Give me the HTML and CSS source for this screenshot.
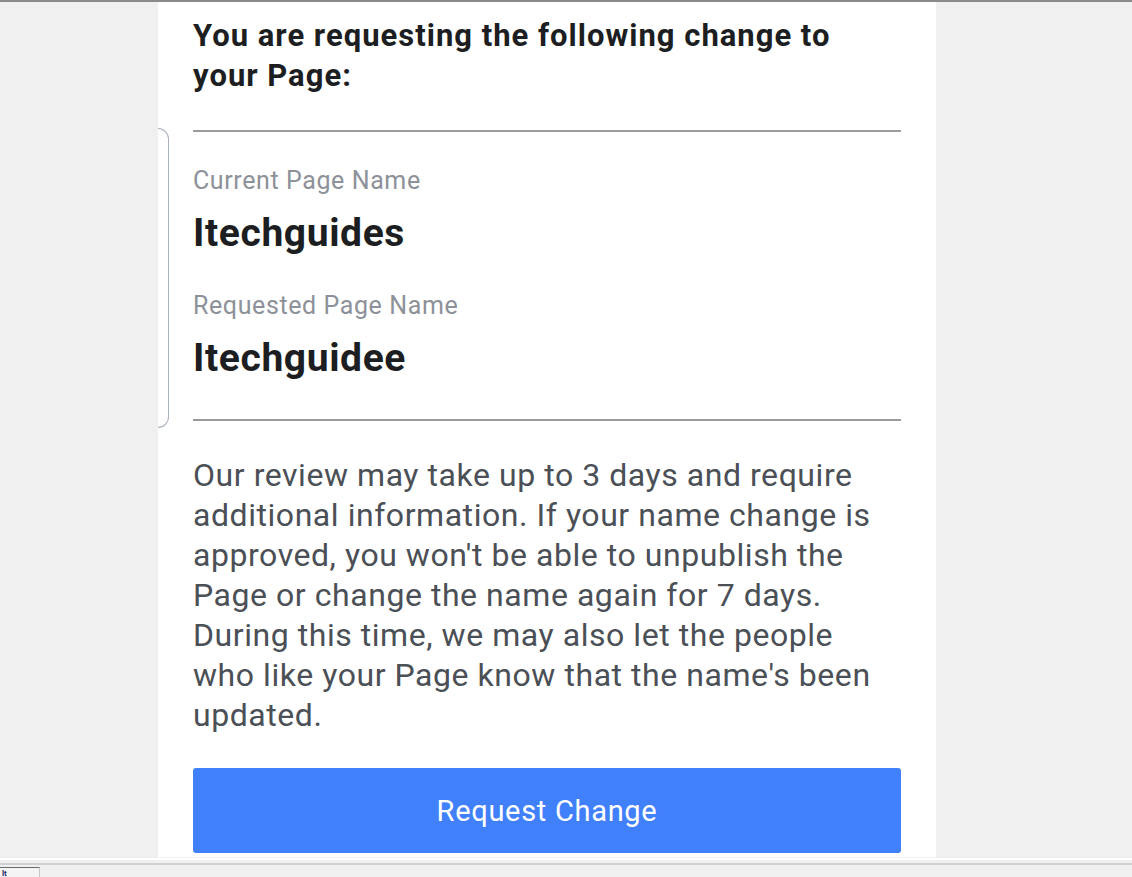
FILE: index.html
```html
<!DOCTYPE html>
<html lang="en">
<head>
<meta charset="utf-8">
<title>Request Change</title>
<link rel="stylesheet" href="styles.css">
</head>
<body>
<div class="topline"></div>
<main class="panel">
  <h1 class="heading">You are requesting the following change to your Page:</h1>
  <section class="names">
    <div class="bracket"></div>
    <div class="names-body">
      <div class="label">Current Page Name</div>
      <div class="name">Itechguides</div>
      <div class="label label-second">Requested Page Name</div>
      <div class="name">Itechguidee</div>
    </div>
  </section>
  <p class="notice">Our review may take up to 3 days and require additional information. If your name change is approved, you won't be able to unpublish the Page or change the name again for 7 days. During this time, we may also let the people who like your Page know that the name's been updated.</p>
  <button class="request" type="button">Request Change</button>
</main>
<footer class="statusbar">
  <div class="status-tab"><span class="tab-glyph">lt</span></div>
</footer>
</body>
</html>
```
FILE: styles.css
```css
html, body {
  margin: 0;
  padding: 0;
}
body {
  width: 1132px;
  height: 877px;
  overflow: hidden;
  background: #f0f0f0;
  font-family: Roboto, "Liberation Sans", Arial, sans-serif;
}
.topline {
  height: 2px;
  background: #8a8a8a;
}
.panel {
  box-sizing: border-box;
  width: 778px;
  height: 855px;
  margin-left: 158px;
  padding: 14px 35px 0 0;
  background: #ffffff;
  display: flex;
  flex-direction: column;
}
.heading {
  margin: 0 40px 0 35px;
  font-size: 31px;
  line-height: 40px;
  letter-spacing: 1px;
  font-weight: 700;
  color: #1c1e21;
}
.names {
  display: flex;
  margin-top: 34px;
}
.bracket {
  width: 10px;
  margin: -2px 24px -7px 0;
  border: 1px solid #a9b0bf;
  border-left: none;
  border-radius: 0 11px 11px 0;
}
.names-body {
  flex: 1;
  border-top: 2px solid #9b9b9b;
  border-bottom: 2px solid #9b9b9b;
  padding: 34px 0 39px;
}
.label {
  font-size: 25px;
  line-height: 30px;
  letter-spacing: 0.6px;
  color: #8d9199;
}
.label-second {
  margin-top: 36px;
}
.name {
  margin-top: 15px;
  font-size: 39px;
  line-height: 44px;
  letter-spacing: 0.6px;
  font-weight: 700;
  color: #1c1e21;
}
.notice {
  margin: 34px 0 0 35px;
  font-size: 32px;
  line-height: 40px;
  letter-spacing: 0.55px;
  color: #4b4f56;
}
.request {
  margin: 33px 0 0 35px;
  height: 85px;
  border: none;
  border-radius: 3px;
  background: #4080fa;
  color: #ffffff;
  font-family: Roboto, "Liberation Sans", Arial, sans-serif;
  font-size: 29px;
  letter-spacing: 0.7px;
  padding: 0;
}
.statusbar {
  height: 20px;
  border-top: 1px solid #f0f0f0;
  position: relative;
}
.statusbar::before {
  content: "";
  display: block;
  height: 2px;
  background: #ffffff;
}
.statusbar::after {
  content: "";
  display: block;
  margin-top: 3px;
  height: 2px;
  background: #d0d1d5;
}
.status-tab {
  position: absolute;
  left: 0;
  top: 9px;
  width: 39px;
  height: 11px;
  border-top: 1px solid #6a6a6a;
  border-right: 1px solid #c8c8c8;
  background: #f4f4f4;
  overflow: hidden;
}
.tab-glyph {
  display: block;
  margin: 1px 0 0 2px;
  font-size: 8px;
  line-height: 9px;
  color: #1a2a6a;
  font-weight: 700;
}
```
